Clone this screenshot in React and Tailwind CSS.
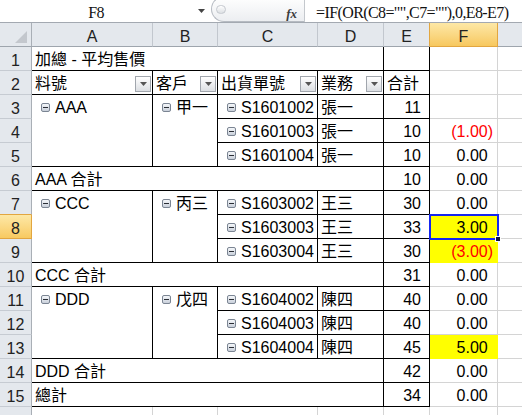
import React from "react";

const SANS = "font-[family-name:'Liberation_Sans','Noto_Sans_CJK_TC',sans-serif]";

const groups = [
  {
    row: 3,
    item: "AAA",
    cust: "甲一",
    rep: "張一",
    total: 10,
    lines: [
      { id: "S1601002", qty: 11, diff: null },
      { id: "S1601003", qty: 10, diff: -1 },
      { id: "S1601004", qty: 10, diff: 0 },
    ],
  },
  {
    row: 7,
    item: "CCC",
    cust: "丙三",
    rep: "王三",
    total: 31,
    lines: [
      { id: "S1603002", qty: 30, diff: 0 },
      { id: "S1603003", qty: 33, diff: 3, fill: true, selected: true },
      { id: "S1603004", qty: 30, diff: -3, fill: true },
    ],
  },
  {
    row: 11,
    item: "DDD",
    cust: "戊四",
    rep: "陳四",
    total: 42,
    lines: [
      { id: "S1604002", qty: 40, diff: 0 },
      { id: "S1604003", qty: 40, diff: 0 },
      { id: "S1604004", qty: 45, diff: 5, fill: true },
    ],
  },
];

function FormulaBar() {
  return (
    <div className="flex h-[23px] overflow-hidden border-b border-[#a3a9b1] bg-white">
      <div className="flex w-[211px] shrink-0 items-center">
        <span className="w-[192px] pt-[3px] text-center font-[family-name:'Liberation_Serif',serif] text-[16px] leading-[19px] tracking-[-0.6px] text-[#111]">
          F8
        </span>
        <span className="flex w-[19px] justify-center">
          <svg width="7" height="4" viewBox="0 0 7 4">
            <path d="M0 0h7L3.5 4z" fill="#444" />
          </svg>
        </span>
      </div>
      <div className="-mt-[4px] flex h-[26px] w-[93px] shrink-0 items-start justify-between rounded-l-[13px] border border-r-0 border-[#b6bbc2] bg-gradient-to-b from-white to-[#eceef1] pl-[4px] pr-[7px]">
        <span className="mt-[8px] h-[9px] w-[10px] rounded-full border border-[#c4c8ce] bg-gradient-to-b from-white to-[#dcdfe3]" />
        <span className="mt-[10px] font-[family-name:'Liberation_Serif',serif] text-[13px] font-bold italic leading-none text-[#3c3c3c]">
          fx
        </span>
      </div>
      <div className="flex-1 whitespace-nowrap border-l border-[#c4c8cd] pl-[11px] pt-[3px] font-[family-name:'Liberation_Serif',serif] text-[16px] leading-[19px] tracking-[-0.6px] text-[#111]">
        =IF(OR(C8="",C7=""),0,E8-E7)
      </div>
    </div>
  );
}

function ColumnHeads() {
  const plain =
    "border-r border-b border-r-[#c2c7ce] border-b-[#9ea5ad] pt-[4px] text-center leading-[19px]";
  return (
    <div className="grid h-[24px] grid-cols-[32px_121px_65px_100px_66px_46px_68px_24px] bg-[#e4e8ed] text-[#222]">
      <div className="flex items-end justify-end border-r border-b border-r-[#a9afb6] border-b-[#9ea5ad] pb-[3px] pr-[4px]">
        <svg width="12" height="12" viewBox="0 0 12 12">
          <path d="M12 0V12H0z" fill="#c3c7cd" />
        </svg>
      </div>
      <div className={plain}>A</div>
      <div className={plain}>B</div>
      <div className={plain}>C</div>
      <div className={plain}>D</div>
      <div className="border-r border-b border-r-[#e2a640] border-b-[#9ea5ad] pt-[4px] text-center leading-[19px]">
        E
      </div>
      <div className="border-r border-b border-[#e2a640] bg-gradient-to-b from-[#fde8a6] to-[#f7c85e] pt-[4px] text-center leading-[19px]">
        F
      </div>
      {/* column G: its label sits past the right edge of the window */}
      <div className="border-b border-[#9ea5ad]" />
    </div>
  );
}

function RowHead({ n, label = true }) {
  if (n === 8) {
    return (
      <div className="border-r border-b border-[#e2a640] bg-gradient-to-b from-[#fde8a6] to-[#f8ca60] pt-[3px] text-center leading-[21px] text-[#222]">
        {n}
      </div>
    );
  }
  if (n === 7) {
    return (
      <div className="border-r border-b border-r-[#a9afb6] border-b-[#e2a640] bg-[#e4e8ed] pt-[3px] text-center leading-[21px] text-[#222]">
        {n}
      </div>
    );
  }
  return (
    <div className="border-r border-b border-r-[#a9afb6] border-b-[#c6cbd2] bg-[#e4e8ed] pt-[3px] text-center leading-[21px] text-[#222]">
      {label ? n : null}
    </div>
  );
}

function MinusBox() {
  return (
    <span className="flex h-[9px] w-[9px] shrink-0 items-center justify-center rounded-[2px] border border-[#7b8593] bg-gradient-to-b from-[#f5f7fa] to-[#c9d0da]">
      <span className="h-px w-[5px] bg-[#2a2e35]" />
    </span>
  );
}

function DropButton() {
  return (
    <span className="mt-[5px] flex h-[16px] w-[16px] shrink-0 items-center justify-center border border-[#a1a6ad] bg-gradient-to-b from-white to-[#dcdfe3]">
      <svg width="7" height="4" viewBox="0 0 7 4">
        <path d="M0 0h7L3.5 4z" fill="#555" />
      </svg>
    </span>
  );
}

function FieldHead({ label }) {
  return (
    <div className="flex justify-between overflow-hidden whitespace-nowrap border-r border-b border-black bg-white pl-[3px] pr-[1px]">
      <span className="pt-[2px] leading-[22px]">{label}</span>
      <DropButton />
    </div>
  );
}

function Expand({ label }) {
  return (
    <div className="flex h-[24px] items-center gap-[5px] whitespace-nowrap pl-[9px]">
      <MinusBox />
      <span className="pt-[2px] leading-[22px]">{label}</span>
    </div>
  );
}

function Diff({ v }) {
  if (v === null || v === undefined) return null;
  if (v < 0) {
    return <span className="text-[#ff0000]">({Math.abs(v).toFixed(2)})</span>;
  }
  return (
    <>
      {v.toFixed(2)}
      <span className="invisible">)</span>
    </>
  );
}

function DiffCell({ v, fill, selected }) {
  return (
    <div
      className={
        fill
          ? "relative whitespace-nowrap border-r border-b border-[#ffff00] bg-[#ffff00] pr-[4px] pt-[2px] text-right leading-[22px]"
          : "relative whitespace-nowrap border-r border-b border-[#d4d4d4] bg-white pr-[4px] pt-[2px] text-right leading-[22px]"
      }
    >
      <Diff v={v} />
      {selected && (
        <span className="absolute -left-[1px] -top-[1px] -right-[2px] -bottom-[2px] z-10 border-2 border-[#1526f0]">
          <span className="absolute -right-[4px] -bottom-[4px] h-[6px] w-[6px] border border-white bg-[#0b1040]" />
        </span>
      )}
    </div>
  );
}

function Blank() {
  return <div className="border-b border-[#d4d4d4] bg-white" />;
}

function QtyCell({ v }) {
  return (
    <div className="overflow-hidden whitespace-nowrap border-r border-b border-black bg-white pr-[8px] pt-[2px] text-right leading-[22px]">
      {v}
    </div>
  );
}

function TotalRow({ n, label, qty }) {
  return (
    <>
      <RowHead n={n} />
      <div className="col-span-4 overflow-hidden whitespace-nowrap border-r border-b border-black bg-white pl-[3px] pt-[2px] leading-[22px]">
        {label}
      </div>
      <QtyCell v={qty} />
      <DiffCell v={0} />
      <Blank />
    </>
  );
}

function Group({ g }) {
  return (
    <>
      {g.lines.map((line, i) => (
        <React.Fragment key={line.id}>
          <RowHead n={g.row + i} />
          {i === 0 && (
            <>
              <div className="row-span-3 overflow-hidden border-r border-b border-black bg-white">
                <Expand label={g.item} />
              </div>
              <div className="row-span-3 overflow-hidden border-r border-b border-black bg-white">
                <Expand label={g.cust} />
              </div>
            </>
          )}
          <div className="overflow-hidden border-r border-b border-black bg-white">
            <Expand label={line.id} />
          </div>
          <div className="overflow-hidden whitespace-nowrap border-r border-b border-black bg-white pl-[3px] pt-[2px] leading-[22px]">
            {g.rep}
          </div>
          <QtyCell v={line.qty} />
          <DiffCell v={line.diff} fill={line.fill} selected={line.selected} />
          <Blank />
        </React.Fragment>
      ))}
      <TotalRow n={g.row + 3} label={`${g.item} 合計`} qty={g.total} />
    </>
  );
}

export default function App() {
  return (
    <div className={`${SANS} h-[415px] w-[522px] overflow-hidden bg-white text-[16px] text-black`}>
      <FormulaBar />
      <ColumnHeads />
      <div className="grid auto-rows-[24px] grid-cols-[32px_121px_65px_100px_66px_46px_68px_24px]">
        {/* row 1: pivot caption */}
        <RowHead n={1} />
        <div className="col-span-4 overflow-hidden whitespace-nowrap border-r border-b border-black bg-white pl-[3px] pt-[2px] leading-[22px]">
          加總 - 平均售價
        </div>
        <div className="border-r border-b border-black bg-white" />
        <DiffCell v={null} />
        <Blank />

        {/* row 2: field headers */}
        <RowHead n={2} />
        <FieldHead label="料號" />
        <FieldHead label="客戶" />
        <FieldHead label="出貨單號" />
        <FieldHead label="業務" />
        <div className="overflow-hidden whitespace-nowrap border-r border-b border-black bg-white pl-[3px] pt-[2px] leading-[22px]">
          合計
        </div>
        <DiffCell v={null} />
        <Blank />

        {groups.map((g) => (
          <Group key={g.item} g={g} />
        ))}

        <TotalRow n={15} label="總計" qty={34} />

        {/* row 16: empty sheet area, its number falls below the window */}
        <RowHead n={16} label={false} />
        <div className="border-r border-[#d4d4d4] bg-white" />
        <div className="border-r border-[#d4d4d4] bg-white" />
        <div className="border-r border-[#d4d4d4] bg-white" />
        <div className="border-r border-[#d4d4d4] bg-white" />
        <div className="border-r border-[#d4d4d4] bg-white" />
        <div className="border-r border-[#d4d4d4] bg-white" />
        <div className="bg-white" />
      </div>
    </div>
  );
}
